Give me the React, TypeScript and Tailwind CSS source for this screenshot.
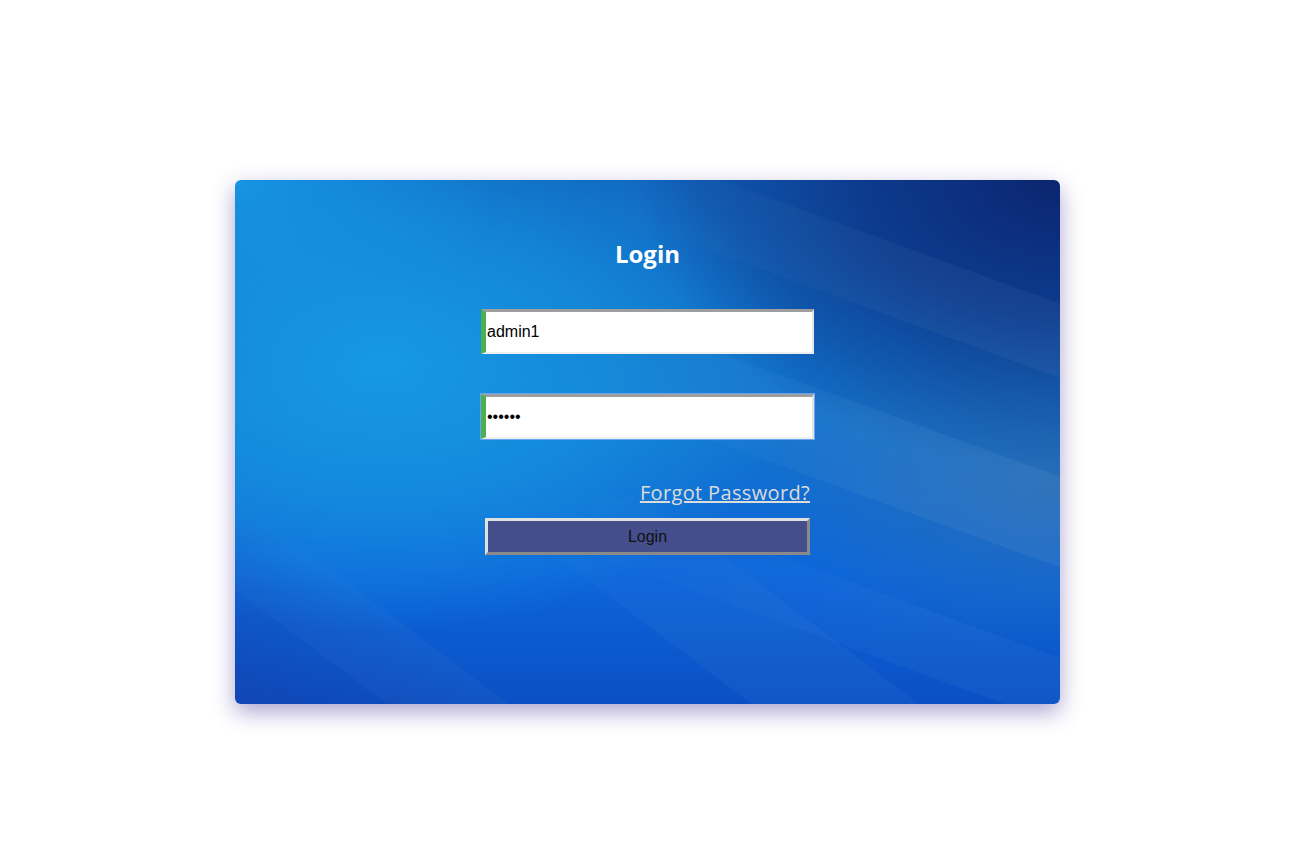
export default function App() {
  return (
    <div className="min-h-screen bg-white flex justify-center pt-[180px]">
      {/* Card */}
      <div className="relative w-[825px] h-[524px] rounded-[6px] overflow-hidden shadow-[0_8px_22px_rgba(70,50,150,0.45)] bg-[radial-gradient(ellipse_60%_65%_at_100%_0%,#0b2570_0%,rgba(12,45,125,0.75)_40%,transparent_85%),radial-gradient(ellipse_45%_40%_at_100%_58%,rgba(42,108,178,0.85),transparent_80%),radial-gradient(ellipse_35%_40%_at_0%_0%,rgba(22,148,226,1),transparent_90%),radial-gradient(ellipse_60%_60%_at_18%_35%,rgba(22,153,228,1),rgba(22,153,228,0.6)_45%,transparent_85%),linear-gradient(180deg,#0f62bc_0%,#1273cc_45%,#0d66da_75%,#0a50c4_100%)]">
        {/* soft streaks, right side */}
        <div className="absolute inset-0 [mask-image:linear-gradient(to_right,transparent_35%,black_85%)] bg-[linear-gradient(200deg,transparent_15%,rgba(255,255,255,0.04)_15%,rgba(255,255,255,0.04)_24%,transparent_24%,transparent_36%,rgba(255,255,255,0.05)_36%,rgba(255,255,255,0.05)_47%,transparent_47%,transparent_58%,rgba(255,255,255,0.035)_58%,rgba(255,255,255,0.035)_66%,transparent_66%)]" />
        {/* soft streaks, bottom */}
        <div className="absolute inset-0 [mask-image:linear-gradient(to_bottom,transparent_55%,black_90%)] bg-[linear-gradient(217deg,transparent_55%,rgba(255,255,255,0.035)_55%,rgba(255,255,255,0.035)_66%,transparent_66%,transparent_82%,rgba(255,255,255,0.03)_82%,rgba(255,255,255,0.03)_90%,transparent_90%)]" />
        {/* darker bottom-left corner */}
        <div className="absolute inset-0 bg-[linear-gradient(35deg,rgba(30,50,150,0.35)_0%,transparent_18%)]" />

        <div className="relative flex flex-col items-center pt-[58px]">
          <h1 className="h-[32px] leading-[32px] text-[24px] font-bold text-white font-['Open_Sans',sans-serif]">
            Login
          </h1>

          <div className="w-[333px] mt-[39px] flex flex-col">
            <input
              type="text"
              defaultValue="admin1"
              className="h-[45px] w-full bg-white pl-[1px] text-[16px] text-black font-['Liberation_Sans',Arial,sans-serif] border-l-[5px] border-l-[#4caf50] border-t-[3px] border-t-[#9e9e9e] border-r-[2px] border-r-[#e6e6e6] border-b-[2px] border-b-[#eeeeee] outline-none"
            />
            <input
              type="password"
              defaultValue="123456"
              className="mt-[40px] h-[45px] w-full bg-white pl-[1px] text-[16px] text-black font-['Liberation_Sans',Arial,sans-serif] border-l-[5px] border-l-[#4caf50] border-t-[3px] border-t-[#9e9e9e] border-r-[2px] border-r-[#e6e6e6] border-b-[2px] border-b-[#eeeeee] outline outline-1 outline-[#6aa5f0]"
            />

            <div className="mt-[40px] flex justify-end pr-[4px]">
              <a
                href="#"
                className="text-[20px] leading-[28px] tracking-[0.35px] text-[#dcdcdc] underline font-['Open_Sans',sans-serif]"
              >
                Forgot Password?
              </a>
            </div>

            <button className="mt-[11px] mx-auto w-[325px] h-[37px] bg-[#434e8b] text-[16px] text-[#111] font-['Liberation_Sans',Arial,sans-serif] border-[3px] border-t-[#e0e0e0] border-l-[#e0e0e0] border-r-[#8a8a8a] border-b-[#8a8a8a]">
              Login
            </button>
          </div>
        </div>
      </div>
    </div>
  );
}
